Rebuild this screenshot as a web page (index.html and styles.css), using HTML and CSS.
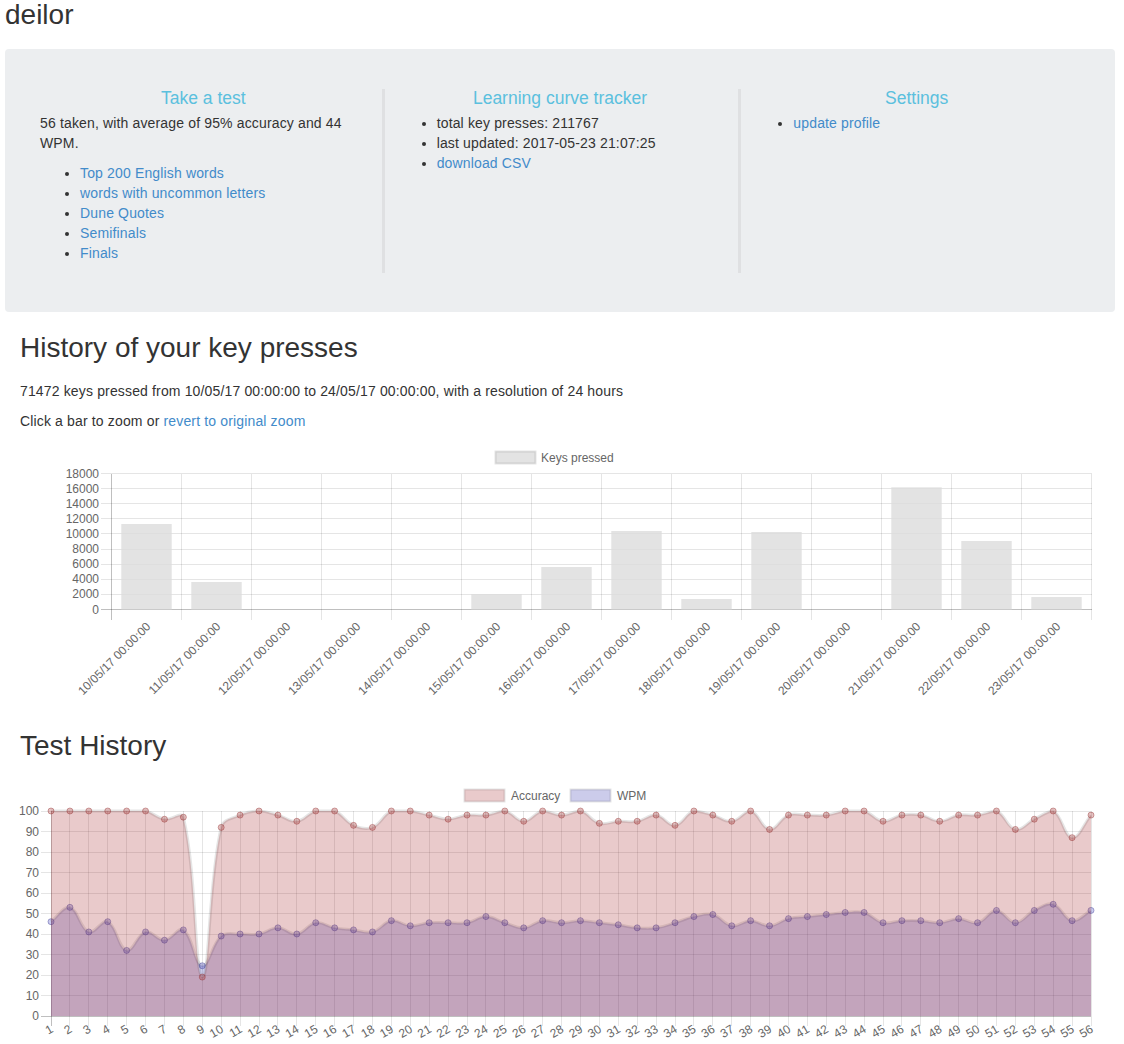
FILE: index.html
```html
<!DOCTYPE html>
<html lang="en">
<head>
<meta charset="utf-8">
<title>deilor</title>
<link rel="stylesheet" href="styles.css">
</head>
<body>
<h1 class="username">deilor</h1>

<div class="dashboard">
  <div class="dash-col">
    <h4 class="dash-title">Take a test</h4>
    <p>56 taken, with average of 95% accuracy and 44 WPM.</p>
    <ul>
      <li><a href="#">Top 200 English words</a></li>
      <li><a href="#">words with uncommon letters</a></li>
      <li><a href="#">Dune Quotes</a></li>
      <li><a href="#">Semifinals</a></li>
      <li><a href="#">Finals</a></li>
    </ul>
  </div>
  <div class="dash-col dash-col-divided">
    <h4 class="dash-title">Learning curve tracker</h4>
    <ul>
      <li>total key presses: 211767</li>
      <li>last updated: 2017-05-23 21:07:25</li>
      <li><a href="#">download CSV</a></li>
    </ul>
  </div>
  <div class="dash-col dash-col-divided">
    <h4 class="dash-title">Settings</h4>
    <ul>
      <li><a href="#">update profile</a></li>
    </ul>
  </div>
</div>

<div class="section">
  <h2 class="section-title">History of your key presses</h2>
  <p>71472 keys pressed from 10/05/17 00:00:00 to 24/05/17 00:00:00, with a resolution of 24 hours</p>
  <p>Click a bar to zoom or <a href="#">revert to original zoom</a></p>
</div>

<svg id="bar-chart" class="chart chart-bar" width="1124" height="270" viewBox="0 441 1124 270" xmlns="http://www.w3.org/2000/svg"></svg>

<div class="section">
  <h2 class="section-title section-title-tight">Test History</h2>
</div>

<svg id="line-chart" class="chart chart-line" width="1124" height="270" viewBox="0 770 1124 270" xmlns="http://www.w3.org/2000/svg"></svg>

<script src="script.js"></script>
</body>
</html>
```

FILE: styles.css
```css
* {
  box-sizing: border-box;
}

body {
  margin: 0;
  font-family: "Liberation Sans", Arial, Helvetica, sans-serif;
  font-size: 14px;
  line-height: 20px;
  color: #333;
  background: #fff;
}

a {
  color: #428bca;
  text-decoration: none;
}

.username {
  margin: 0 0 20px 5px;
  font-size: 28px;
  line-height: 29px;
  font-weight: 400;
}

.dashboard {
  margin: 0 9px 0 5px;
  padding: 40px 20px 39px;
  background: #eceef0;
  border-radius: 4px;
  display: grid;
  grid-template-columns: repeat(3, 1fr);
}

.dash-col {
  padding: 0 15px;
}

.dash-col-divided {
  border-left: 3px solid #dfe0e2;
  padding-left: 12px;
}

.dash-title {
  margin: -1px 0 5px;
  text-align: center;
  font-size: 17.5px;
  line-height: 20px;
  font-weight: 400;
  color: #5bc0de;
}

.dash-col p,
.dash-col li {
  letter-spacing: 0.15px;
}

.dash-col p {
  margin: 0 0 10px;
}

.dash-col ul {
  margin: 0 0 10px;
  padding-left: 40px;
}

.section {
  padding: 0 20px;
}

.section-title {
  margin: 20px 0 18px;
  font-size: 28px;
  line-height: 31px;
  font-weight: 400;
}

.section-title-tight {
  margin: 19px 0 9px;
}

.section p {
  margin: 0 0 10px;
  letter-spacing: 0.15px;
}

.chart {
  display: block;
}

.chart text {
  font-family: "Liberation Sans", Arial, Helvetica, sans-serif;
  font-size: 12px;
  fill: #666;
}

.chart .tick-y {
  text-anchor: end;
  dominant-baseline: central;
}

.chart .tick-x {
  text-anchor: end;
  dominant-baseline: central;
}

.chart .legend-label {
  dominant-baseline: central;
}

.grid-line {
  stroke: rgba(0, 0, 0, 0.1);
  stroke-width: 1;
  shape-rendering: crispEdges;
}

.axis-line {
  stroke: rgba(0, 0, 0, 0.25);
  stroke-width: 1;
  shape-rendering: crispEdges;
}

.bar {
  fill: rgba(220, 220, 220, 0.8);
}

.legend-box {
  stroke: rgba(0, 0, 0, 0.1);
  stroke-width: 2;
}

.legend-keys {
  fill: rgba(220, 220, 220, 0.8);
}

.area-acc,
.legend-acc {
  fill: rgba(167, 43, 47, 0.25);
}

.area-wpm,
.legend-wpm {
  fill: rgba(40, 40, 170, 0.24);
}

.series-line {
  fill: none;
  stroke: rgba(0, 0, 0, 0.1);
  stroke-width: 3;
}

.point {
  stroke-width: 1;
}

.point-acc {
  fill: rgba(175, 55, 55, 0.3);
  stroke: rgba(140, 40, 40, 0.4);
}

.point-wpm {
  fill: rgba(50, 50, 190, 0.25);
  stroke: rgba(50, 50, 140, 0.4);
}
```

FILE: script.js
```js
(function () {
  var NS = 'http://www.w3.org/2000/svg';

  function el(parent, tag, attrs, text) {
    var e = document.createElementNS(NS, tag);
    for (var k in attrs) {
      if (Object.prototype.hasOwnProperty.call(attrs, k)) {
        e.setAttribute(k, attrs[k]);
      }
    }
    if (text !== undefined) {
      e.textContent = text;
    }
    parent.appendChild(e);
    return e;
  }

  /* ---------- Keys pressed (bar chart) ---------- */
  var bar = document.getElementById('bar-chart');
  var days = ['10', '11', '12', '13', '14', '15', '16', '17', '18', '19', '20', '21', '22', '23'];
  var keys = [11316, 3640, 0, 0, 0, 2050, 5625, 10390, 1390, 10257, 0, 16173, 9066, 1654];
  var bLeft = 111.5, bRight = 1091.5, bTop = 473.5, bBottom = 609.5, bMax = 18000;
  var bCat = (bRight - bLeft) / keys.length;
  var k, i, x, y;

  for (k = 0; k <= 9; k++) {
    y = bTop + k * (bBottom - bTop) / 9;
    el(bar, 'line', { x1: 101, x2: bRight, y1: y, y2: y, 'class': k === 9 ? 'axis-line' : 'grid-line' });
    el(bar, 'text', { x: 99, y: y, 'class': 'tick-y' }, String((9 - k) * 2000));
  }
  for (i = 0; i <= keys.length; i++) {
    x = bLeft + i * bCat;
    el(bar, 'line', { x1: x, x2: x, y1: bTop, y2: bBottom + 10, 'class': i === 0 ? 'axis-line' : 'grid-line' });
  }
  keys.forEach(function (v, idx) {
    var cx = bLeft + (idx + 0.5) * bCat;
    if (v > 0) {
      var h = v * (bBottom - bTop) / bMax;
      el(bar, 'rect', { x: cx - 25.2, y: bBottom - h, width: 50.4, height: h, 'class': 'bar' });
    }
    var ly = bBottom + 15;
    el(bar, 'text', {
      x: cx + 2,
      y: ly,
      transform: 'rotate(-45 ' + (cx + 2) + ' ' + ly + ')',
      'class': 'tick-x'
    }, days[idx] + '/05/17 00:00:00');
  });
  el(bar, 'rect', { x: 495.5, y: 451.5, width: 40, height: 12, 'class': 'legend-box legend-keys' });
  el(bar, 'text', { x: 541, y: 457.5, 'class': 'legend-label' }, 'Keys pressed');

  /* ---------- Test history (line chart) ---------- */
  var line = document.getElementById('line-chart');
  var acc = [100, 100, 100, 100, 100, 100, 96, 97, 19, 92,
             98, 100, 98, 95, 100, 100, 93, 92, 100, 100,
             98, 96, 98, 98, 100, 95, 100, 98, 100, 94,
             95, 95, 98, 93, 100, 98, 95, 100, 91, 98,
             98, 98, 100, 100, 95, 98, 98, 95, 98, 98,
             100, 91, 96, 100, 87, 98];
  var wpm = [46, 53, 41, 46, 32, 41, 37, 42, 24.5, 39,
             40, 40, 43, 40, 45.5, 43, 42, 41, 46.5, 44,
             45.5, 45.5, 45.5, 48.5, 45.5, 43, 46.5, 45.5, 46.5, 45.5,
             44.5, 43, 43, 45.5, 48.5, 49.5, 44, 46.5, 44, 47.5,
             48.5, 49.5, 50.5, 50.5, 45.5, 46.5, 46.5, 45.5, 47.5, 45.5,
             51.5, 45.5, 51.5, 54.5, 46.5, 51.5];
  var lLeft = 51, lRight = 1091, lTop = 811, lBottom = 1016;
  var step = (lRight - lLeft) / (acc.length - 1);

  function yOf(v) {
    return lBottom - v * (lBottom - lTop) / 100;
  }

  for (k = 0; k <= 10; k++) {
    y = lTop + k * (lBottom - lTop) / 10;
    el(line, 'line', { x1: 41, x2: lRight, y1: y, y2: y, 'class': k === 10 ? 'axis-line' : 'grid-line' });
    el(line, 'text', { x: 39, y: y, 'class': 'tick-y' }, String(100 - k * 10));
  }
  for (i = 0; i < acc.length; i++) {
    x = lLeft + i * step;
    el(line, 'line', { x1: x, x2: x, y1: lTop, y2: lBottom + 10, 'class': i === 0 ? 'axis-line' : 'grid-line' });
    var ty = lBottom + 12;
    el(line, 'text', {
      x: x + 1,
      y: ty,
      transform: 'rotate(-30 ' + (x + 1) + ' ' + ty + ')',
      'class': 'tick-x'
    }, String(i + 1));
  }

  function clamp(v, lo, hi) {
    return Math.min(Math.max(v, lo), hi);
  }

  function series(vals, cls) {
    var pts = vals.map(function (v, idx) {
      return { x: lLeft + idx * step, y: yOf(v) };
    });
    var t = 0.4;
    var cps = pts.map(function (p, idx) {
      var p0 = pts[idx - 1] || p;
      var p2 = pts[idx + 1] || p;
      var d01 = Math.sqrt(Math.pow(p.x - p0.x, 2) + Math.pow(p.y - p0.y, 2));
      var d12 = Math.sqrt(Math.pow(p2.x - p.x, 2) + Math.pow(p2.y - p.y, 2));
      var s01 = d01 / (d01 + d12);
      var s12 = d12 / (d01 + d12);
      if (isNaN(s01)) { s01 = 0; }
      if (isNaN(s12)) { s12 = 0; }
      var fa = t * s01, fb = t * s12;
      return {
        px: clamp(p.x - fa * (p2.x - p0.x), lLeft, lRight),
        py: clamp(p.y - fa * (p2.y - p0.y), lTop, lBottom),
        nx: clamp(p.x + fb * (p2.x - p0.x), lLeft, lRight),
        ny: clamp(p.y + fb * (p2.y - p0.y), lTop, lBottom)
      };
    });
    var d = 'M' + pts[0].x + ' ' + pts[0].y;
    for (var j = 1; j < pts.length; j++) {
      d += ' C' + cps[j - 1].nx + ' ' + cps[j - 1].ny + ' ' + cps[j].px + ' ' + cps[j].py + ' ' + pts[j].x + ' ' + pts[j].y;
    }
    el(line, 'path', { d: d + ' L' + lRight + ' ' + lBottom + ' L' + lLeft + ' ' + lBottom + ' Z', 'class': 'area area-' + cls });
    el(line, 'path', { d: d, 'class': 'series-line' });
    pts.forEach(function (p) {
      el(line, 'circle', { cx: p.x, cy: p.y, r: 3, 'class': 'point point-' + cls });
    });
  }

  series(wpm, 'wpm');
  series(acc, 'acc');

  el(line, 'rect', { x: 464.5, y: 789.5, width: 40, height: 12, 'class': 'legend-box legend-acc' });
  el(line, 'text', { x: 511, y: 795.5, 'class': 'legend-label' }, 'Accuracy');
  el(line, 'rect', { x: 570.5, y: 789.5, width: 40, height: 12, 'class': 'legend-box legend-wpm' });
  el(line, 'text', { x: 617, y: 795.5, 'class': 'legend-label' }, 'WPM');
})();
```
